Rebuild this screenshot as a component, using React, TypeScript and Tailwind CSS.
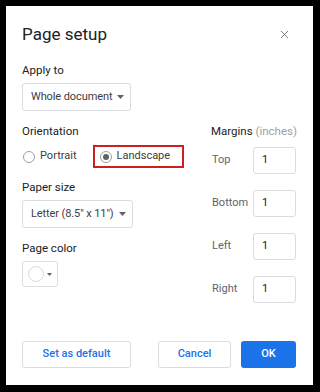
import { X } from "lucide-react";

const Caret = () => (
  <svg width="7" height="4" viewBox="0 0 7 4" className="ml-[5px]">
    <path d="M0 0h7L3.5 4z" fill="#5f6368" />
  </svg>
);

const Dropdown = ({ label }: { label: string }) => (
  <div className="flex items-center h-[28px] pl-[8px] pr-[6px] border border-[#dadce0] rounded-[3px] text-[11px] tracking-[-0.1px] text-[#3c4043] self-start">
    <span>{label}</span>
    <Caret />
  </div>
);

const Radio = ({ checked }: { checked?: boolean }) => (
  <span className="w-[12px] h-[12px] rounded-full border border-[#9aa0a6] flex items-center justify-center">
    {checked && <span className="w-[6px] h-[6px] rounded-full bg-[#5f6368]" />}
  </span>
);

const margins = ["Top", "Bottom", "Left", "Right"];

export default function App() {
  return (
    <div className="w-[320px] h-[392px] bg-black pt-[6px] pl-[6px] font-['Roboto',sans-serif]">
      <div className="w-[307px] h-[379px] bg-white flex flex-col pt-[16px] pl-[16px] pr-[17px] pb-[17px]">
        <div className="flex items-center justify-between h-[24px]">
          <h1 className="text-[17px] leading-[24px] text-[#202124]">Page setup</h1>
          <X className="w-[13px] h-[13px] mr-[5px] text-[#5f6368]" strokeWidth={1.5} />
        </div>

        <div className="mt-[16px] text-[11.5px] leading-[16px] text-[#202124]">Apply to</div>
        <div className="mt-[5px] flex">
          <Dropdown label="Whole document" />
        </div>

        <div className="mt-[12px] flex">
          <div className="w-[189px] shrink-0 flex flex-col">
            <div className="text-[11.5px] leading-[16px] text-[#202124]">Orientation</div>
            <div className="mt-[6px] h-[23px] flex items-center text-[11px] text-[#3c4043]">
              <div className="flex items-center gap-[5px] ml-[1px]">
                <Radio />
                <span>Portrait</span>
              </div>
              <div className="ml-[16px] h-[23px] w-[91px] border-2 border-[#cc1f1f] flex items-center gap-[5px] pl-[5px]">
                <Radio checked />
                <span>Landscape</span>
              </div>
            </div>
            <div className="mt-[11px] text-[11.5px] leading-[16px] text-[#202124]">Paper size</div>
            <div className="mt-[5px] flex">
              <Dropdown label={'Letter (8.5" x 11")'} />
            </div>
            <div className="mt-[12px] text-[11.5px] leading-[16px] text-[#202124]">Page color</div>
            <div className="mt-[5px] w-[36px] h-[26px] border border-[#dadce0] rounded-[3px] flex items-center pl-[5px]">
              <span className="w-[16px] h-[16px] rounded-full border border-[#dadce0]" />
              <svg width="5" height="3" viewBox="0 0 7 4" className="ml-[3px]">
                <path d="M0 0h7L3.5 4z" fill="#5f6368" />
              </svg>
            </div>
          </div>

          <div className="w-[85px] shrink-0 flex flex-col">
            <div className="whitespace-nowrap text-[11.5px] leading-[16px] text-[#202124]">
              Margins <span className="text-[#9aa0a6]">(inches)</span>
            </div>
            <div className="mt-[8px] flex flex-col gap-[16px]">
              {margins.map((m) => (
                <div key={m} className="flex items-center">
                  <span className="w-[42px] pl-[1px] text-[11px] text-[#5f6368]">{m}</span>
                  <div className="w-[43px] h-[27px] border border-[#dadce0] rounded-[3px] flex items-center pl-[8px] text-[11px] text-[#202124]">
                    1
                  </div>
                </div>
              ))}
            </div>
          </div>
        </div>

        <div className="mt-auto flex items-center">
          <button className="w-[109px] h-[27px] border border-[#dadce0] rounded-[3px] text-[11px] font-medium text-[#1a73e8]">
            Set as default
          </button>
          <button className="ml-auto w-[73px] h-[27px] border border-[#dadce0] rounded-[3px] text-[11px] font-medium text-[#1a73e8]">
            Cancel
          </button>
          <button className="ml-[10px] w-[55px] h-[27px] rounded-[3px] bg-[#1a73e8] text-[11px] font-medium text-white">
            OK
          </button>
        </div>
      </div>
    </div>
  );
}
